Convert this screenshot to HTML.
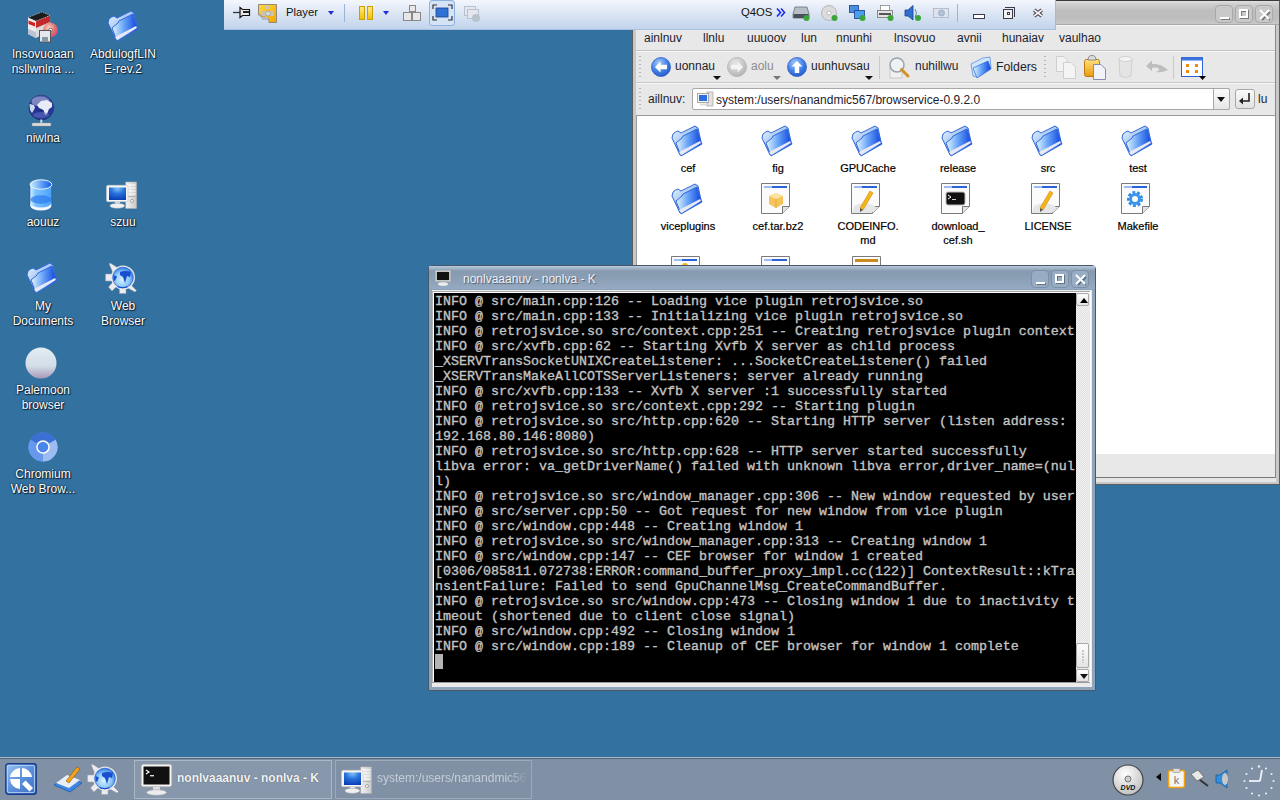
<!DOCTYPE html>
<html><head><meta charset="utf-8">
<style>
*{margin:0;padding:0;box-sizing:border-box}
html,body{width:1280px;height:800px;overflow:hidden}
body{background:#3372a0;font-family:"Liberation Sans",sans-serif;position:relative}
.a{position:absolute}
svg{position:absolute;overflow:visible}
/* desktop icons */
.dl{position:absolute;margin-top:1px;color:#fff;font-size:12px;line-height:15px;text-align:center;text-shadow:0 0 1px #0c2238,0 0 2px #0c2238,1px 1px 1px #0c2238;width:100px;white-space:nowrap}
/* file manager */
#fm{left:632px;top:0;width:648px;height:485px;background:#c8c8c8;border:1px solid #5d5d5d;border-top-color:#3a3a3a}
#fmt{left:0;top:0;width:646px;height:24px;background:linear-gradient(#e0e0e0,#cfcfcf 12%,#bebebe 40%,#bdbdbd 70%,#c7c7c7 94%,#a9a9a9 94%)}
#fmin{left:3px;top:24px;width:640px;height:453px;background:linear-gradient(#f4f4f4 0 1px,#e8e8e8 1px);border-right:1px solid #8a8a8a;border-bottom:1px solid #777;box-shadow:0 4px 0 #e6e6e6}
.tb{position:absolute;top:4px;width:18px;height:18px;border:1px solid #a9a9a9;border-radius:4px;background:#c9c9c9}
.mn{position:absolute;top:6px;font-size:12px;color:#1d1d2d;white-space:nowrap}
.tt{position:absolute;font-size:12px;color:#1d1d2d;white-space:nowrap}
.grip{width:2px;background:repeating-linear-gradient(#b4b4b4 0 1px,transparent 1px 4px)}
.tri{width:0;height:0;border-style:solid;border-width:4px 4px 0 4px;border-color:#111 transparent transparent transparent}
.fl{position:absolute;font-size:11px;line-height:14px;color:#000;-webkit-text-stroke:0.2px #000;text-align:center;width:90px}
/* terminal */
#tw{left:428px;top:265px;width:668px;height:426px;background:#8fa5bc;border:1px solid #4a5868;border-radius:4px 4px 0 0}
#twt{left:0;top:0;width:666px;height:24px;background:linear-gradient(#b6c8da 0,#a4b8cc 2px,#879aaf 5px,#8a9eb4 12px,#95abc3 23px,#8aa0b8 23px)}
#tfr{left:3px;top:24px;width:660px;height:397px;background:#ebebeb}
#sb{left:644px;top:3px;width:14px;height:389px;background:repeating-conic-gradient(#f4f4f4 0 25%,#dedede 0 50%) 0 0/2px 2px}
.sbb{left:0;width:13px;height:13px;background:linear-gradient(#fdfdfd,#e4e4e4);border:1px solid #a9a9a9;border-radius:2px}
#term{left:2px;top:3px;width:642px;height:389px;background:#000}
#tl{left:1px;top:1px;font-family:"Liberation Mono",monospace;font-weight:normal;font-size:13.33px;line-height:15px;color:#c4c4c4;-webkit-text-stroke:0.35px #c4c4c4;white-space:pre}
.ttb{position:absolute;top:4px;width:18px;height:18px;border:1px solid #7c90a6;border-radius:4px;background:#98adc3}
/* player bar */
#pb{left:224px;top:0;width:832px;height:30px;background:linear-gradient(#f3f7fa,#f1f4fc 6%,#dce6f3 45%,#c3d5ed 96%);border-right:1px solid #9fbbdd;border-bottom:1px solid #a9c2e0}
/* taskbar */
#tk{left:0;top:757px;width:1280px;height:43px;background:#8091a6;border-top:1px solid #a9b8c8}
.tsk{position:absolute;top:2px;height:39px;border:1px solid #9aaabb;background:#8093a8}
</style></head><body>

<svg width="0" height="0" style="position:absolute">
<defs>
 <linearGradient id="gfold" x1="0" y1="0" x2="1" y2="0"><stop offset="0" stop-color="#e6f5ff"/><stop offset=".45" stop-color="#6aa6f7"/><stop offset="1" stop-color="#0a3fe0"/></linearGradient>
 <linearGradient id="gback" x1="0" y1="0" x2="1" y2="1"><stop offset="0" stop-color="#f0faff"/><stop offset="1" stop-color="#4a86ea"/></linearGradient>
 <g id="folder">
  <path d="M5,17 L6,13 Q8,11 11,10 L14,12 L26,6 L28,5 L31,7 L34,21 L13,34 Z" fill="url(#gback)" stroke="#2f66d6" stroke-width="1"/>
  <path d="M9,22 L15,17 L16,15 L30,8 L34,21 L35,23 L14,35 Z" fill="url(#gfold)" stroke="#2f66d6" stroke-width="1"/>
  <path d="M12,31 L33,20 L34,22 L14,34 Z" fill="#e9e9f4"/>
 </g>
 <g id="doc">
  <path d="M0.5,0.5 H28.5 V23.5 L21.5,30.5 H0.5 Z" fill="#fbfbfb" stroke="#7a7a7a"/>
  <path d="M21.5,30.5 L21.5,23.5 H28.5" fill="#e2e2e2" stroke="#7a7a7a"/>
  <rect x="3" y="3" width="23" height="2" fill="#2a62d8"/>
  <rect x="3" y="3" width="8" height="2" fill="#9fbaf0"/>
 </g>
</defs>
</svg>

<!-- ===== desktop icons ===== -->
<div id="desk">
 <!-- package tool -->
 <svg style="left:26px;top:10px" width="34" height="34" viewBox="0 0 34 34">
  <defs><radialGradient id="gcd" cx=".4" cy=".35" r=".7"><stop offset="0" stop-color="#fbd6c8"/><stop offset=".6" stop-color="#e0706a"/><stop offset="1" stop-color="#c8488a"/></radialGradient></defs>
  <path d="M2,7.5 L10,11 L10,28 L2,24 Z" fill="#ececec"/>
  <path d="M2,19 L10,22 L10,28 L2,24 Z" fill="#b8c4d2"/>
  <path d="M2.5,10.5 L9,13 L9,16.5 L2.5,14 Z" fill="#d42020"/>
  <path d="M10,11 L24,5.5 L24.5,20 L10,28 Z" fill="#dcdcdc"/>
  <path d="M10,11 L24,5.5 L24.2,12 L10,18 Z" fill="#c42a2a"/>
  <path d="M2,7.5 L16,2 L24,5.5 L10,11 Z" fill="#1c1c1c" stroke="#eee" stroke-width=".6" stroke-dasharray="1 1"/>
  <circle cx="24.5" cy="20" r="7.3" fill="url(#gcd)"/><circle cx="24.5" cy="20" r="1.8" fill="#fff" stroke="#334" stroke-width=".6"/>
  <rect x="13.5" y="20.5" width="11" height="11.5" fill="#e4e8ec" stroke="#555" stroke-width="1"/>
  <rect x="16" y="27" width="6" height="5" fill="#8a96a2"/>
 </svg>
 <div class="dl" style="left:-7px;top:46px">lnsovuoaan</div>
 <div class="dl" style="left:-7px;top:61px">nsllwnlna ...</div>
 <!-- folder -->
 <svg style="left:103px;top:6px" width="40" height="40" viewBox="0 0 40 40"><use href="#folder"/></svg>
 <div class="dl" style="left:73px;top:46px">AbdulogfLIN</div>
 <div class="dl" style="left:73px;top:61px">E-rev.2</div>
 <!-- globe -->
 <svg style="left:28px;top:95px" width="28" height="32" viewBox="0 0 28 32">
  <defs><radialGradient id="gglobe" cx=".5" cy=".55" r=".6"><stop offset="0" stop-color="#1a2a8a"/><stop offset=".8" stop-color="#2a3c9c"/><stop offset="1" stop-color="#8a9ad8"/></radialGradient></defs>
  <circle cx="13.3" cy="12.5" r="12.4" fill="url(#gglobe)" stroke="#0e1650" stroke-width=".5"/>
  <ellipse cx="12.5" cy="6.5" rx="9" ry="5" fill="#fff" opacity=".4"/>
  <path d="M9,10 L13,6 L19,5 L24,8 L24,12 L21,14 L19,19 L17,20 L15.5,15 L11,13 Z" fill="#e8ecf8"/>
  <path d="M1.5,9 L6,10 L7,13 L4,18 L2,15 Z" fill="#d0d8f0"/>
  <ellipse cx="13.3" cy="20" rx="8" ry="3" fill="#6a78c8" opacity=".5"/>
  <rect x="12.3" y="24.5" width="2" height="4" fill="#d8d8d8"/>
  <rect x="4" y="28" width="19" height="3" rx="1" fill="#dcdcdc" stroke="#999" stroke-width=".4"/>
 </svg>
 <div class="dl" style="left:-7px;top:130px">niwlna</div>
 <!-- trash -->
 <svg style="left:29px;top:178px" width="24" height="33" viewBox="0 0 24 33">
  <defs><linearGradient id="gtr" x1="0" y1="0" x2="1" y2="0"><stop offset="0" stop-color="#d8f2ff"/><stop offset=".25" stop-color="#7cc4ff"/><stop offset="1" stop-color="#4aa0f8"/></linearGradient>
  <linearGradient id="gtt" x1="0" y1="0" x2="1" y2="0"><stop offset="0" stop-color="#c8f0ff"/><stop offset="1" stop-color="#0a58ee"/></linearGradient></defs>
  <path d="M1,6.5 V27.5 A10.9,4.5 0 0 0 22.8,27.5 V6.5 Z" fill="url(#gtr)" stroke="#1a4fb0" stroke-width=".6"/>
  <path d="M1.5,25 A10.4,4.5 0 0 0 22.3,25 V28 A10.4,4.5 0 0 1 1.5,28 Z" fill="#f4f8ff"/>
  <ellipse cx="11.9" cy="21.5" rx="10.4" ry="4.2" fill="#2a7af0" opacity=".7"/>
  <ellipse cx="11.9" cy="6.5" rx="10.9" ry="4.7" fill="url(#gtt)" stroke="#eaf6ff" stroke-width="1"/>
 </svg>
 <div class="dl" style="left:-7px;top:214px">aouuz</div>
 <!-- computer -->
 <svg style="left:105px;top:181px" width="33" height="29" viewBox="0 0 33 29">
  <g id="compg"><defs><radialGradient id="gscr" cx=".5" cy=".1" r=".9"><stop offset="0" stop-color="#7cc0f4"/><stop offset=".45" stop-color="#2a72dc"/><stop offset="1" stop-color="#0a3fb8"/></radialGradient>
  <linearGradient id="gtow" x1="0" y1="0" x2="1" y2="0"><stop offset="0" stop-color="#f4f4f4"/><stop offset="1" stop-color="#c8c8c8"/></linearGradient></defs>
  <rect x="20.8" y="1" width="10.7" height="26.4" fill="url(#gtow)" stroke="#b4b4b4" stroke-width=".6"/>
  <path d="M22,4 H30.5 M22,7 H30.5 M22,10 H30.5 M22,13 H30.5" stroke="#fff" stroke-width="1.2"/>
  <path d="M22,15.5 H30.5" stroke="#999" stroke-width=".6"/>
  <circle cx="27" cy="20" r="1.6" fill="#eee" stroke="#888" stroke-width=".6"/>
  <rect x="1.5" y="4.3" width="21.5" height="16.4" rx="1.5" fill="#f6f6f6" stroke="#c4c4c4" stroke-width=".6"/>
  <rect x="4" y="6.5" width="17" height="12.5" fill="url(#gscr)"/>
  <rect x="10" y="20.5" width="5" height="2" fill="#ddd"/>
  <ellipse cx="12.3" cy="24.8" rx="7.3" ry="2.4" fill="#f0f0f0" stroke="#c8c8c8" stroke-width=".5"/></g>
 </svg>
 <div class="dl" style="left:73px;top:214px">szuu</div>
 <!-- My Documents -->
 <svg style="left:22px;top:258px" width="40" height="40" viewBox="0 0 40 40"><use href="#folder"/></svg>
 <div class="dl" style="left:-7px;top:298px">My</div>
 <div class="dl" style="left:-7px;top:313px">Documents</div>
 <!-- Web browser -->
 <svg style="left:104px;top:262px" width="34" height="32" viewBox="0 0 34 32">
  <g id="kqg"><defs><radialGradient id="gkq" cx=".45" cy=".6" r=".6"><stop offset="0" stop-color="#d8f4ff"/><stop offset=".6" stop-color="#8cc8f8"/><stop offset="1" stop-color="#2f78e0"/></radialGradient></defs>
  <path d="M5,1.5 L7,1.5 L14,6 L9,11 Z M1.5,12 H9 V19 H1.5 Z M4.5,25 L9,20 L13,24 L8,29 Z M15.5,24 H22 V31.5 H15.5 Z M25,21 L32.5,28.5 L31,30 L22,25 Z" fill="#ececf0" stroke="#9a9aa8" stroke-width=".5"/>
  <circle cx="19" cy="15.5" r="12" fill="#e6e6ea"/>
  <circle cx="19" cy="15.5" r="10.3" fill="url(#gkq)" stroke="#2a66d8" stroke-width=".8"/>
  <path d="M9.5,13 L13,14.5 L11,19 L9.5,18 Z M16,10 Q21,8 27,10 L26,15 L23,14 L21,21 L19,15 L16,13 Z M13,24 Q19,26 24,24 L23,25.5 Q19,27 14,25.5 Z" fill="#1a4fd0"/></g>
 </svg>
 <div class="dl" style="left:73px;top:298px">Web</div>
 <div class="dl" style="left:73px;top:313px">Browser</div>
 <!-- Palemoon -->
 <svg style="left:25px;top:347px" width="32" height="32" viewBox="0 0 32 32">
  <defs><linearGradient id="gpm" x1="0" y1="0" x2="0" y2="1"><stop offset="0" stop-color="#e4ecf2"/><stop offset=".6" stop-color="#d2dde8"/><stop offset="1" stop-color="#a898b8"/></linearGradient></defs>
  <circle cx="16" cy="16" r="15.5" fill="url(#gpm)"/>
 </svg>
 <div class="dl" style="left:-7px;top:382px">Palemoon</div>
 <div class="dl" style="left:-7px;top:397px">browser</div>
 <!-- Chromium -->
 <svg style="left:28px;top:432px" width="30" height="30" viewBox="0 0 30 30">
  <circle cx="15" cy="15" r="14.5" fill="#5f93ea"/>
  <path d="M15,15 L2.4,7.75 A14.5,14.5 0 0 1 27.6,7.75 Z" fill="#3c6fd4"/>
  <path d="M15,15 L27.6,7.75 A14.5,14.5 0 0 1 15,29.5 Z" fill="#9dbcf2"/>
  <path d="M15,15 L15,29.5 A14.5,14.5 0 0 1 2.4,7.75 Z" fill="#6898ec"/>
  <circle cx="15" cy="15" r="6.8" fill="#fff"/>
  <circle cx="15" cy="15" r="5.3" fill="#4a86e8"/>
 </svg>
 <div class="dl" style="left:-7px;top:466px">Chromium</div>
 <div class="dl" style="left:-7px;top:481px">Web Brow...</div>
</div>

<!-- ===== file manager window ===== -->
<div id="fm" class="a">
  <div id="fmt" class="a">
    <div class="tb" style="left:582px"><div class="a" style="left:4px;top:11px;width:9px;height:2px;background:#fff;box-shadow:1px 1px 0 #7a7a7a"></div></div>
    <div class="tb" style="left:602px"><div class="a" style="left:3px;top:3px;width:9px;height:9px;border:2px solid #fff;box-shadow:1px 1px 0 #7a7a7a,inset 1px 1px 0 #7a7a7a"></div></div>
    <div class="tb" style="left:622px"><svg style="left:3px;top:3px" width="12" height="12" viewBox="0 0 12 12"><path d="M2,2 L10,10 M10,2 L2,10" stroke="#7a7a7a" stroke-width="2" transform="translate(1,1)"/><path d="M1,1 L10,10 M10,1 L1,10" stroke="#fff" stroke-width="2"/></svg></div>
  </div>
  <div id="fmin" class="a">
    <!-- menu -->
    <div class="mn" style="left:8px">ainlnuv</div>
    <div class="mn" style="left:67px">llnlu</div>
    <div class="mn" style="left:111px">uuuoov</div>
    <div class="mn" style="left:165px">lun</div>
    <div class="mn" style="left:200px">nnunhi</div>
    <div class="mn" style="left:258px">lnsovuo</div>
    <div class="mn" style="left:321px">avnii</div>
    <div class="mn" style="left:366px">hunaiav</div>
    <div class="mn" style="left:423px">vaulhao</div>
    <div class="a" style="left:0;top:25px;width:639px;height:1px;background:#c4c4c4"></div>
    <div class="a" style="left:0;top:26px;width:639px;height:1px;background:#f6f6f6"></div>
    <!-- toolbar -->
    <div class="a grip" style="left:3px;top:31px;height:23px"></div>
    <svg style="left:15px;top:32px" width="20" height="20" viewBox="0 0 20 20">
     <defs><radialGradient id="gbl" cx=".4" cy=".3" r=".75"><stop offset="0" stop-color="#a9cdfb"/><stop offset=".6" stop-color="#3f7ee6"/><stop offset="1" stop-color="#2457c4"/></radialGradient>
     <radialGradient id="ggr" cx=".4" cy=".3" r=".75"><stop offset="0" stop-color="#e6e6e6"/><stop offset="1" stop-color="#b3b3b3"/></radialGradient></defs>
     <circle cx="10" cy="10" r="9.5" fill="url(#gbl)" stroke="#2b5fc8" stroke-width=".8"/>
     <path d="M4,10 L9.5,4.5 L9.5,7.8 L16,7.8 L16,12.2 L9.5,12.2 L9.5,15.5 Z" fill="#fff"/>
    </svg>
    <div class="tt" style="left:39px;top:33px;line-height:16px">uonnau</div>
    <div class="a tri" style="left:77px;top:51px"></div>
    <svg style="left:91px;top:32px" width="20" height="20" viewBox="0 0 20 20">
     <circle cx="10" cy="10" r="9.5" fill="url(#ggr)" stroke="#b0b0b0" stroke-width=".8"/>
     <path d="M16,10 L10.5,4.5 L10.5,7.8 L4,7.8 L4,12.2 L10.5,12.2 L10.5,15.5 Z" fill="#f4f4f4"/>
    </svg>
    <div class="tt" style="left:115px;top:33px;line-height:16px;color:#8c8c8c">aolu</div>
    <div class="a tri" style="left:137px;top:51px;border-top-color:#777"></div>
    <svg style="left:151px;top:32px" width="20" height="20" viewBox="0 0 20 20">
     <circle cx="10" cy="10" r="9.5" fill="url(#gbl)" stroke="#2b5fc8" stroke-width=".8"/>
     <path d="M10,4 L15.5,9.5 L12.2,9.5 L12.2,16 L7.8,16 L7.8,9.5 L4.5,9.5 Z" fill="#fff"/>
    </svg>
    <div class="tt" style="left:175px;top:33px;line-height:16px">uunhuvsau</div>
    <div class="a tri" style="left:229px;top:51px"></div>
    <div class="a" style="left:243px;top:31px;width:1px;height:23px;background:#c8c8c8"></div>
    <svg style="left:252px;top:31px" width="24" height="24" viewBox="0 0 24 24">
     <rect x="2" y="12" width="12" height="10" fill="#f0f0f0" stroke="#c9c9c9"/>
     <circle cx="9" cy="9" r="7" fill="#eef2f6" stroke="#9aa2aa" stroke-width="1.5"/>
     <path d="M13.5,13.5 L20,20" stroke="#d4932a" stroke-width="3" stroke-linecap="round"/>
    </svg>
    <div class="tt" style="left:279px;top:33px;line-height:16px">nuhillwu</div>
    <svg style="left:332px;top:31px" width="26" height="24" viewBox="0 0 26 24">
     <path d="M3,8 L15,2 L22,1 L23,12 L9,21 L5,20 Z" fill="#cfe6fb" stroke="#5a8fe0" stroke-width=".8"/>
     <path d="M5,12 L20,5 L23,13 L9,22 Z" fill="url(#gfold)" stroke="#3a72d8" stroke-width=".8"/>
    </svg>
    <div class="tt" style="left:360px;top:34px;line-height:16px;font-size:12.3px">Folders</div>
    <div class="a grip" style="left:408px;top:31px;height:23px"></div>
    <svg style="left:420px;top:31px" width="22" height="23" viewBox="0 0 22 23">
     <path d="M0.5,0.5 H8 L11,3.5 V15.5 H0.5 Z" fill="#f2f2f2" stroke="#cfcfcf"/>
     <path d="M7.5,6.5 H15 L19.5,11 V22.5 H7.5 Z" fill="#f4f4f4" stroke="#cfcfcf"/>
    </svg>
    <svg style="left:448px;top:30px" width="24" height="25" viewBox="0 0 24 25">
     <defs><linearGradient id="gpst" x1="0" y1="0" x2="0" y2="1"><stop offset="0" stop-color="#ffe27a"/><stop offset="1" stop-color="#e89a10"/></linearGradient></defs>
     <rect x="0.5" y="4.5" width="15" height="17" rx="2" fill="url(#gpst)" stroke="#b97a10"/>
     <path d="M4,5 Q4,0.5 8,0.5 Q12,0.5 12,5 Z" fill="#ddd" stroke="#777" stroke-width=".8"/>
     <path d="M9.5,9.5 H17 L21.5,14 V24.5 H9.5 Z" fill="#f2f2fa" stroke="#8a8aaa"/>
    </svg>
    <svg style="left:482px;top:31px" width="16" height="23" viewBox="0 0 16 23">
     <path d="M1,3 L2,20 Q7.5,23 13,20 L14,3 Z" fill="#e4e4e4" stroke="#cfcfcf"/>
     <ellipse cx="7.5" cy="3" rx="6.5" ry="2.5" fill="#f4f4f4" stroke="#cfcfcf"/>
    </svg>
    <svg style="left:509px;top:35px" width="24" height="15" viewBox="0 0 24 15">
     <path d="M1,6 L7,0.5 L7,4 Q16,3 23,10 Q16,13 11,12 Q16,10 13,8 Q10,7 7,8 L7,11 Z" fill="#bdbdbd"/>
    </svg>
    <div class="a" style="left:537px;top:31px;width:1px;height:23px;background:#c8c8c8"></div>
    <svg style="left:545px;top:32px" width="27" height="23" viewBox="0 0 27 23">
     <rect x="0.5" y="0.5" width="21" height="19" fill="#fff" stroke="#2e62d2"/>
     <rect x="0.5" y="0.5" width="21" height="3" fill="#3b74e0"/>
     <rect x="5" y="7" width="3" height="3" fill="#f08a10"/><rect x="14" y="7" width="3" height="3" fill="#f08a10"/>
     <rect x="5" y="13" width="3" height="3" fill="#f08a10"/><rect x="14" y="13" width="3" height="3" fill="#f08a10"/>
     <path d="M18,19 L25,19 L21.5,23 Z" fill="#000"/>
    </svg>
    <div class="a" style="left:0;top:57px;width:639px;height:1px;background:#c9c9c9"></div>
    <div class="a" style="left:0;top:58px;width:639px;height:1px;background:#f6f6f6"></div>
    <!-- location bar -->
    <div class="a grip" style="left:3px;top:63px;height:23px"></div>
    <div class="tt" style="left:12px;top:66px;line-height:16px">aillnuv:</div>
    <div class="a" style="left:56px;top:63px;width:538px;height:22px;background:#fff;border:1px solid #a8a8a8;border-radius:2px"></div>
    <svg style="left:61px;top:66px" width="17" height="16" viewBox="0 0 17 16">
     <rect x="10" y="1" width="6" height="14" fill="#e2e2e2" stroke="#aaa" stroke-width=".8"/>
     <rect x="0.5" y="2.5" width="11" height="9" fill="#f4f4f4" stroke="#9a9a9a" stroke-width=".8"/>
     <rect x="2" y="4" width="8" height="6" fill="#2b6fe0"/>
     <rect x="3" y="12.5" width="6" height="2" fill="#ddd"/>
    </svg>
    <div class="tt" style="left:80px;top:67px;line-height:16px">system:/users/nanandmic567/browservice-0.9.2.0</div>
    <div class="a" style="left:577px;top:63px;width:17px;height:22px;background:linear-gradient(#fbfbfb,#e6e6e6);border:1px solid #a8a8a8;border-radius:0 2px 2px 0"></div>
    <div class="a tri" style="left:581px;top:72px;border-width:5px 4.5px 0 4.5px"></div>
    <div class="a" style="left:599px;top:64px;width:20px;height:20px;background:linear-gradient(#fafafa,#e2e2e2);border:1px solid #a8a8a8;border-radius:3px"></div>
    <svg style="left:602px;top:67px" width="14" height="14" viewBox="0 0 14 14"><path d="M11,1 V9 H4" fill="none" stroke="#222" stroke-width="1.6"/><path d="M1,9 L5,5.5 L5,12.5 Z" fill="#222"/></svg>
    <div class="tt" style="left:622px;top:66px;line-height:16px">lu</div>
    
    <!-- content -->
    <div class="a" style="left:0;top:90px;width:639px;height:339px;background:#fff;border-top:1px solid #9a9a9a;border-left:1px solid #9a9a9a">
     <svg style="left:30px;top:5px" width="40" height="40" viewBox="0 0 40 40"><use href="#folder"/></svg>
     <svg style="left:120px;top:5px" width="40" height="40" viewBox="0 0 40 40"><use href="#folder"/></svg>
     <svg style="left:210px;top:5px" width="40" height="40" viewBox="0 0 40 40"><use href="#folder"/></svg>
     <svg style="left:300px;top:5px" width="40" height="40" viewBox="0 0 40 40"><use href="#folder"/></svg>
     <svg style="left:390px;top:5px" width="40" height="40" viewBox="0 0 40 40"><use href="#folder"/></svg>
     <svg style="left:480px;top:5px" width="40" height="40" viewBox="0 0 40 40"><use href="#folder"/></svg>
     <div class="fl" style="left:6px;top:45px">cef</div>
     <div class="fl" style="left:96px;top:45px">fig</div>
     <div class="fl" style="left:186px;top:45px">GPUCache</div>
     <div class="fl" style="left:276px;top:45px">release</div>
     <div class="fl" style="left:366px;top:45px">src</div>
     <div class="fl" style="left:456px;top:45px">test</div>
     <svg style="left:30px;top:63px" width="40" height="40" viewBox="0 0 40 40"><use href="#folder"/></svg>
     <svg style="left:124px;top:67px" width="30" height="32" viewBox="0 0 30 32"><use href="#doc"/>
      <path d="M15,10 L22,13 L22,21 L15,25 L8,21 L8,13 Z" fill="#f6c45a"/><path d="M8,13 L15,16 L22,13 L15,10 Z" fill="#fde3a0"/><path d="M15,16 L15,25" stroke="#e3a93a"/></svg>
     <svg style="left:214px;top:67px" width="30" height="32" viewBox="0 0 30 32"><use href="#doc"/>
      <path d="M3,23 Q14,17 25,24 L21,30 H1 Z" fill="#e6e6e6"/><path d="M19,8 L22,10 L12,27 L9,25 Z" fill="#f5b418" stroke="#c98a0a" stroke-width=".6"/><path d="M9,25 L12,27 L9,29 Z" fill="#555"/></svg>
     <svg style="left:304px;top:67px" width="30" height="32" viewBox="0 0 30 32"><use href="#doc"/>
      <rect x="5" y="9" width="19" height="13" rx="2" fill="#111" stroke="#bbb"/><path d="M7,12 L10,14 L7,16" stroke="#fff" fill="none" stroke-width="1"/><rect x="11" y="16" width="4" height="1" fill="#ccc"/></svg>
     <svg style="left:394px;top:67px" width="30" height="32" viewBox="0 0 30 32"><use href="#doc"/>
      <path d="M3,23 Q14,17 25,24 L21,30 H1 Z" fill="#e6e6e6"/><path d="M19,8 L22,10 L12,27 L9,25 Z" fill="#f5b418" stroke="#c98a0a" stroke-width=".6"/><path d="M9,25 L12,27 L9,29 Z" fill="#555"/></svg>
     <svg style="left:484px;top:67px" width="30" height="32" viewBox="0 0 30 32"><use href="#doc"/>
      <circle cx="14" cy="16" r="6" fill="none" stroke="#2f8de6" stroke-width="4" stroke-dasharray="2.6 1.6"/><circle cx="14" cy="16" r="4.5" fill="none" stroke="#3b95ea" stroke-width="3"/></svg>
     <div class="fl" style="left:6px;top:103px">viceplugins</div>
     <div class="fl" style="left:96px;top:103px">cef.tar.bz2</div>
     <div class="fl" style="left:186px;top:103px">CODEINFO.<br>md</div>
     <div class="fl" style="left:276px;top:103px">download_<br>cef.sh</div>
     <div class="fl" style="left:366px;top:103px">LICENSE</div>
     <div class="fl" style="left:456px;top:103px">Makefile</div>
     <svg style="left:34px;top:140px" width="30" height="32" viewBox="0 0 30 32"><use href="#doc"/><circle cx="14" cy="10" r="3" fill="#f5b418"/></svg>
     <svg style="left:124px;top:140px" width="30" height="32" viewBox="0 0 30 32"><use href="#doc"/></svg>
     <svg style="left:215px;top:140px" width="30" height="32" viewBox="0 0 30 32"><use href="#doc"/><rect x="3" y="3" width="23" height="3" fill="#c98a20"/></svg>
    </div>
  </div>
</div>

<!-- ===== terminal window ===== -->
<div id="tw" class="a">
  <div id="twt" class="a">
    <svg style="left:6px;top:4px" width="16" height="16" viewBox="0 0 16 16">
     <rect x="0.5" y="0.5" width="15" height="11" rx="1" fill="#f0f0f0" stroke="#aaa" stroke-width=".6"/>
     <rect x="1.8" y="1.8" width="12.4" height="8.4" fill="#111"/>
     <ellipse cx="8" cy="14" rx="5" ry="1.8" fill="#eee"/>
    </svg>
    <div class="a" style="left:34px;top:5px;font-size:12px;line-height:16px;color:#eef1f5;white-space:nowrap;text-shadow:1px 1px 1px #4a5a6c">nonlvaaanuv - nonlva - K</div>
    <div class="ttb" style="left:602px"><div class="a" style="left:4px;top:11px;width:9px;height:2px;background:#fff;box-shadow:1px 1px 0 #5f7287"></div></div>
    <div class="ttb" style="left:622px"><div class="a" style="left:3px;top:3px;width:9px;height:9px;border:2px solid #fff;box-shadow:1px 1px 0 #5f7287,inset 1px 1px 0 #5f7287"></div></div>
    <div class="ttb" style="left:642px"><svg style="left:3px;top:3px" width="12" height="12" viewBox="0 0 12 12"><path d="M2,2 L10,10 M10,2 L2,10" stroke="#5f7287" stroke-width="2" transform="translate(1,1)"/><path d="M1,1 L10,10 M10,1 L1,10" stroke="#fff" stroke-width="2"/></svg></div>
  </div>
  <div id="tfr" class="a">
   <div class="a" style="left:0;top:1px;width:659px;height:1px;background:#a6a6a6"></div>
   <div class="a" style="left:0;top:1px;width:1px;height:392px;background:#b4b4b4"></div>
   <div class="a" style="left:1px;top:2px;width:657px;height:1px;background:#fff"></div>
   <div class="a" style="left:1px;top:2px;width:1px;height:390px;background:#fff"></div>
   <div class="a" style="left:0;top:392px;width:659px;height:1px;background:#9c9c9c"></div>
   <div class="a" style="left:658px;top:1px;width:1px;height:392px;background:#fff"></div>
   <div id="sb" class="a">
    <div class="a sbb" style="top:0"><div class="a tri" style="left:3px;top:4px;border-width:0 4px 5px 4px;border-color:transparent transparent #000 transparent"></div></div>
    <div class="a sbb" style="top:350px;height:25px"><div class="a" style="left:5px;top:6px;width:2px;height:13px;background:repeating-linear-gradient(#c8c8c8 0 2px,transparent 2px 3px)"></div></div>
    <div class="a sbb" style="top:376px"><div class="a tri" style="left:3px;top:4px;border-width:5px 4px 0 4px"></div></div>
   </div>
  <div id="term" class="a">
<div id="tl" class="a">INFO @ src/main.cpp:126 -- Loading vice plugin retrojsvice.so
INFO @ src/main.cpp:133 -- Initializing vice plugin retrojsvice.so
INFO @ retrojsvice.so src/context.cpp:251 -- Creating retrojsvice plugin context
INFO @ src/xvfb.cpp:62 -- Starting Xvfb X server as child process
_XSERVTransSocketUNIXCreateListener: ...SocketCreateListener() failed
_XSERVTransMakeAllCOTSServerListeners: server already running
INFO @ src/xvfb.cpp:133 -- Xvfb X server :1 successfully started
INFO @ retrojsvice.so src/context.cpp:292 -- Starting plugin
INFO @ retrojsvice.so src/http.cpp:620 -- Starting HTTP server (listen address:
192.168.80.146:8080)
INFO @ retrojsvice.so src/http.cpp:628 -- HTTP server started successfully
libva error: va_getDriverName() failed with unknown libva error,driver_name=(nul
l)
INFO @ retrojsvice.so src/window_manager.cpp:306 -- New window requested by user
INFO @ src/server.cpp:50 -- Got request for new window from vice plugin
INFO @ src/window.cpp:448 -- Creating window 1
INFO @ retrojsvice.so src/window_manager.cpp:313 -- Creating window 1
INFO @ src/window.cpp:147 -- CEF browser for window 1 created
[0306/085811.072738:ERROR:command_buffer_proxy_impl.cc(122)] ContextResult::kTra
nsientFailure: Failed to send GpuChannelMsg_CreateCommandBuffer.
INFO @ retrojsvice.so src/window.cpp:473 -- Closing window 1 due to inactivity t
imeout (shortened due to client close signal)
INFO @ src/window.cpp:492 -- Closing window 1
INFO @ src/window.cpp:189 -- Cleanup of CEF browser for window 1 complete
</div>
<div class="a" style="left:1px;top:361px;width:8px;height:15px;background:#b4b4b4"></div>
  </div>
  </div>
</div>

<!-- ===== player bar ===== -->
<div id="pb" class="a">
 <svg style="left:9px;top:7px" width="18" height="11" viewBox="0 0 18 11">
  <path d="M0,5.5 H7" stroke="#333" stroke-width="1.3"/>
  <path d="M7,0.5 L9.5,2.5 H16.5 V8.5 H9.5 L7,10.5 Z" fill="#e8e8e8" stroke="#111" stroke-width="1.2"/>
  <path d="M10,4 H16 V6 H10 Z" fill="#222"/>
 </svg>
 <svg style="left:34px;top:4px" width="20" height="19" viewBox="0 0 20 19">
  <defs><linearGradient id="gpz" x1="0" y1="0" x2="1" y2="1"><stop offset="0" stop-color="#ffd84a"/><stop offset="1" stop-color="#f5a400"/></linearGradient></defs>
  <path d="M0.5,0.5 H18.5 V18.5 H11 V15 H7 V13 H3 V11 H0.5 Z" fill="url(#gpz)" stroke="#8f8a7a" stroke-width="1"/>
  <rect x="4" y="7" width="12" height="5" fill="#c9c5b0"/>
  <circle cx="10" cy="9.5" r="2.5" fill="#d9d9d9" stroke="#9a9a9a" stroke-width=".8"/>
  <rect x="7" y="2" width="5" height="3" fill="#c9c5b0"/>
  <rect x="4" y="13" width="6" height="3" fill="#b5b9c4"/>
 </svg>
 <div class="a" style="left:62px;top:5px;font-size:11.3px;color:#111;line-height:14px">Player</div>
 <div class="a tri" style="left:104px;top:11px;border-width:4px 3.5px 0 3.5px;border-top-color:#1f2fe0"></div>
 <div class="a" style="left:120px;top:4px;width:1px;height:18px;background:#98b4d6"></div>
 <div class="a" style="left:135px;top:6px;width:6px;height:14px;background:linear-gradient(#ffe88a,#f5c000);border:1px solid #c7a200"></div>
 <div class="a" style="left:143px;top:6px;width:6px;height:14px;background:linear-gradient(#ffe88a,#f5c000);border:1px solid #c7a200"></div>
 <div class="a tri" style="left:159px;top:11px;border-width:4px 3.5px 0 3.5px;border-top-color:#1f2fe0"></div>
 <svg style="left:179px;top:5px" width="19" height="16" viewBox="0 0 19 16">
  <rect x="6.5" y="0.5" width="6" height="6" fill="#e8e8e8" stroke="#888"/>
  <rect x="0.5" y="7.5" width="8" height="8" fill="#e8e8e8" stroke="#888"/>
  <rect x="9.5" y="7.5" width="8" height="8" fill="#e8e8e8" stroke="#888"/>
 </svg>
 <div class="a" style="left:205px;top:0;width:26px;height:26px;background:#d4e3f5;border:1px solid #8db2df;border-radius:3px"></div>
 <svg style="left:208px;top:4px" width="21" height="17" viewBox="0 0 21 17">
  <rect x="4" y="4" width="12" height="9" fill="#2f72d4" stroke="#1c3f8a" stroke-width=".8"/>
  <path d="M1,5 V1 H5 M16,1 H20 V5 M20,12 V16 H16 M5,16 H1 V12" fill="none" stroke="#333" stroke-width="1.2"/>
 </svg>
 <svg style="left:240px;top:6px" width="17" height="16" viewBox="0 0 17 16">
  <rect x="0.5" y="0.5" width="11" height="9" fill="#e4e8ee" stroke="#b8c2cf"/>
  <rect x="3.5" y="3.5" width="11" height="9" fill="#e4e8ee" stroke="#b8c2cf"/>
  <circle cx="12" cy="12" r="4" fill="#b8c2cf"/>
 </svg>
 <div class="a" style="left:517px;top:5px;font-size:11.3px;color:#111;line-height:14px">Q4OS</div>
 <svg style="left:552px;top:8px" width="10" height="9" viewBox="0 0 10 9"><path d="M1,0.5 L4.5,4.5 L1,8.5 M5,0.5 L8.5,4.5 L5,8.5" fill="none" stroke="#1a28f0" stroke-width="1.6"/></svg>
 <svg style="left:569px;top:6px" width="17" height="15" viewBox="0 0 17 15">
  <path d="M2,1 H14 L16,8 V12 H0 V8 Z" fill="#b8bec6" stroke="#6a7078" stroke-width=".8"/>
  <rect x="0.5" y="8" width="15" height="4" fill="#4a5058"/>
  <circle cx="13.5" cy="12" r="3" fill="#3aa53a"/>
 </svg>
 <svg style="left:597px;top:5px" width="17" height="16" viewBox="0 0 17 16">
  <circle cx="8" cy="8" r="7.5" fill="#dcdcdc" stroke="#aaa" stroke-width=".8"/>
  <circle cx="8" cy="8" r="2" fill="#fff" stroke="#999" stroke-width=".6"/>
  <circle cx="13.5" cy="13" r="3" fill="#3aa53a"/>
 </svg>
 <svg style="left:625px;top:5px" width="17" height="16" viewBox="0 0 17 16">
  <rect x="0.5" y="0.5" width="9" height="7" fill="#4a8ee0" stroke="#1c3f8a" stroke-width=".8"/>
  <rect x="5.5" y="5.5" width="10" height="8" fill="#4a9ef0" stroke="#1c3f8a" stroke-width=".8"/>
  <circle cx="13.5" cy="13" r="3" fill="#3aa53a"/>
 </svg>
 <svg style="left:653px;top:5px" width="17" height="16" viewBox="0 0 17 16">
  <rect x="3.5" y="0.5" width="9" height="5" fill="#fff" stroke="#888" stroke-width=".8"/>
  <rect x="0.5" y="5.5" width="15" height="7" fill="#e2e2e2" stroke="#777" stroke-width=".8"/>
  <rect x="2" y="8" width="12" height="2" fill="#555"/>
  <circle cx="13.5" cy="13" r="3" fill="#3aa53a"/>
 </svg>
 <svg style="left:680px;top:5px" width="18" height="16" viewBox="0 0 18 16">
  <path d="M1,5 H4 L9,0.5 V15 L4,11 H1 Z" fill="#2f6fd0" stroke="#17408a" stroke-width=".8"/>
  <path d="M11,4 Q14,8 11,12" fill="none" stroke="#6a8ab0" stroke-width="1"/>
  <circle cx="14" cy="13" r="3" fill="#3aa53a"/>
 </svg>
 <svg style="left:709px;top:7px" width="17" height="11" viewBox="0 0 17 11">
  <rect x="0.5" y="1.5" width="15" height="9" fill="#dde4ee" stroke="#aab4c2" stroke-width=".8"/>
  <circle cx="8.5" cy="6" r="3" fill="#b4c2d8" stroke="#8a9ab4" stroke-width=".6"/>
 </svg>
 <div class="a" style="left:733px;top:4px;width:1px;height:18px;background:#98b4d6"></div>
 <div class="a" style="left:749px;top:14px;width:12px;height:5px;background:#fff;border:1.5px solid #3a3a4a"></div>
 <div class="a" style="left:781px;top:7px;width:10px;height:10px;border:1.5px solid #3a3a4a;border-left:none;border-bottom:none"></div>
 <div class="a" style="left:779px;top:9px;width:10px;height:10px;background:#f2f2f2;border:1.5px solid #3a3a4a"></div>
 <div class="a" style="left:783px;top:12px;width:3px;height:3px;border:1px solid #3a3a4a"></div>
 <svg style="left:808px;top:8px" width="12" height="10" viewBox="0 0 12 10"><path d="M2.2,2 L9.8,8 M9.8,2 L2.2,8" stroke="#4a3a4a" stroke-width="3.6"/><path d="M2.2,2 L9.8,8 M9.8,2 L2.2,8" stroke="#f2f2f2" stroke-width="1.6"/></svg>
</div>

<!-- ===== taskbar ===== -->
<div id="tk" class="a">
 <div class="a" style="left:0;top:0;width:1280px;height:1px;background:#55677b"></div>
 <svg style="left:5px;top:5px" width="32" height="32" viewBox="0 0 32 32">
  <defs><linearGradient id="gkm" x1="0" y1="0" x2="1" y2="1"><stop offset="0" stop-color="#9cc4f2"/><stop offset=".5" stop-color="#5a90da"/><stop offset="1" stop-color="#3d6fc4"/></linearGradient></defs>
  <rect x="0.8" y="0.8" width="30.4" height="30.4" rx="2.5" fill="url(#gkm)" stroke="#1a3c8c" stroke-width="1.4"/>
  <rect x="2.5" y="2.5" width="27" height="27" rx="1.5" fill="none" stroke="#bcd6f6" stroke-width=".8"/>
  <path d="M15,5 A10.5,10.5 0 0 0 5,14 H15 Z M17,5 A10.5,10.5 0 0 1 27,14 H17 Z M5,16 A10.5,10.5 0 0 0 15,26 V16 Z" fill="#fff"/>
  <path d="M17,21 L20.5,17.5 L28,25 L24.5,28.5 Z" fill="#fff"/>
 </svg>
 <svg style="left:52px;top:5px" width="32" height="32" viewBox="0 0 32 32">
  <path d="M2,22 L14,14 L30,20 L18,29 Z" fill="#3e86e0" stroke="#1e5ab8" stroke-width=".8"/>
  <path d="M4,20 L15,12 L28,17 L17,25 Z" fill="#e8eef6"/>
  <path d="M14,18 L25,4 L28,6 L17,20 Z" fill="#f4a21a" stroke="#8a5a0a" stroke-width=".6"/>
 </svg>
 <svg style="left:86px;top:5px" width="34" height="32" viewBox="0 0 34 32">
  <use href="#kqg"/>
 </svg>
 <div class="tsk" style="left:134px;width:198px;background:#8898ac;border-color:#a9b7c7"></div>
 <svg style="left:140px;top:5px" width="33" height="33" viewBox="0 0 33 33">
  <rect x="1" y="1" width="31" height="23" rx="2" fill="#f4f4f4" stroke="#999"/>
  <rect x="3.5" y="3.5" width="26" height="18" fill="#111"/>
  <path d="M6,7 L9,9 L6,11" stroke="#fff" fill="none" stroke-width="1.2"/><rect x="10" y="12" width="4" height="1.4" fill="#ddd"/>
  <rect x="13" y="24" width="7" height="4" fill="#e0e0e0"/>
  <ellipse cx="16.5" cy="29.5" rx="10" ry="2.8" fill="#ececec" stroke="#aaa" stroke-width=".6"/>
 </svg>
 <div class="a" style="left:177px;top:12px;font-size:12px;font-weight:bold;color:#f2f4f6;line-height:16px;white-space:nowrap;text-shadow:0 0 1px #445">nonlvaaanuv - nonlva - K</div>
 <div class="tsk" style="left:335px;width:197px;background:#8091a6;border-color:#9aaabb"></div>
 <svg style="left:340px;top:8px" width="33" height="29" viewBox="0 0 33 29"><use href="#compg"/></svg>
 <div class="a" style="left:377px;top:12px;width:152px;overflow:hidden;font-size:12px;color:#c6cdd6;line-height:16px;white-space:nowrap;-webkit-mask-image:linear-gradient(90deg,#000 85%,transparent)">system:/users/nanandmic567</div>
 <svg style="left:1112px;top:6px" width="32" height="32" viewBox="0 0 32 32">
  <defs><radialGradient id="gdvd" cx=".4" cy=".3" r=".8"><stop offset="0" stop-color="#ffffff"/><stop offset="1" stop-color="#b9b9b9"/></radialGradient></defs>
  <circle cx="16" cy="16" r="15" fill="url(#gdvd)" stroke="#444" stroke-width="1.2"/>
  <circle cx="16" cy="15" r="3" fill="#ccc" stroke="#777"/>
  <text x="16" y="25.5" font-family="Liberation Sans" font-weight="bold" font-style="italic" font-size="7" text-anchor="middle" fill="#111">DVD</text>
 </svg>
 <div class="a tri" style="left:1156px;top:15px;border-width:4px 5px 4px 0;border-color:transparent #000 transparent transparent"></div>
 <svg style="left:1168px;top:10px" width="18" height="20" viewBox="0 0 18 20">
  <rect x="0.5" y="2.5" width="16" height="17" rx="2" fill="#f5f5f5" stroke="#f0a010" stroke-width="1.5"/>
  <rect x="5" y="0.5" width="7" height="4" rx="1" fill="#ddd" stroke="#888" stroke-width=".6"/>
  <text x="8.5" y="16" font-family="Liberation Sans" font-size="11" text-anchor="middle" fill="#777">k</text>
 </svg>
 <svg style="left:1190px;top:11px" width="20" height="18" viewBox="0 0 20 18">
  <path d="M1,5 L8,1 L14,8 L7,12 Z" fill="#e8e8e8" stroke="#666" stroke-width=".8"/>
  <path d="M10,11 L18,17" stroke="#333" stroke-width="2"/>
 </svg>
 <svg style="left:1215px;top:11px" width="18" height="20" viewBox="0 0 18 20">
  <path d="M1,6 H5 L12,1 V19 L5,14 H1 Z" fill="#2f8ee0" stroke="#1c5a9a" stroke-width=".8"/>
  <ellipse cx="10" cy="10" rx="3" ry="6" fill="#c8c8c8"/>
 </svg>
 <svg style="left:1242px;top:6px" width="34" height="34" viewBox="0 0 34 34">
  <g fill="#e6ecf2"><circle cx="17" cy="2.5" r="1.2"/><circle cx="24" cy="4.5" r="1.1"/><circle cx="29.5" cy="10" r="1.1"/><circle cx="31.5" cy="17" r="1.1"/><circle cx="29.5" cy="24" r="1.1"/><circle cx="24" cy="29.5" r="1.1"/><circle cx="17" cy="31.5" r="1.1"/><circle cx="10" cy="29.5" r="1.1"/><circle cx="4.5" cy="24" r="1.1"/><circle cx="2.5" cy="17" r="1.1"/><circle cx="4.5" cy="10" r="1.1"/><circle cx="10" cy="4.5" r="1.1"/></g>
  <path d="M18,17 L20,6" stroke="#eef2f6" stroke-width="1.8"/><path d="M18,17 L7,17" stroke="#eef2f6" stroke-width="1.8"/>
 </svg>
</div>

</body></html>
